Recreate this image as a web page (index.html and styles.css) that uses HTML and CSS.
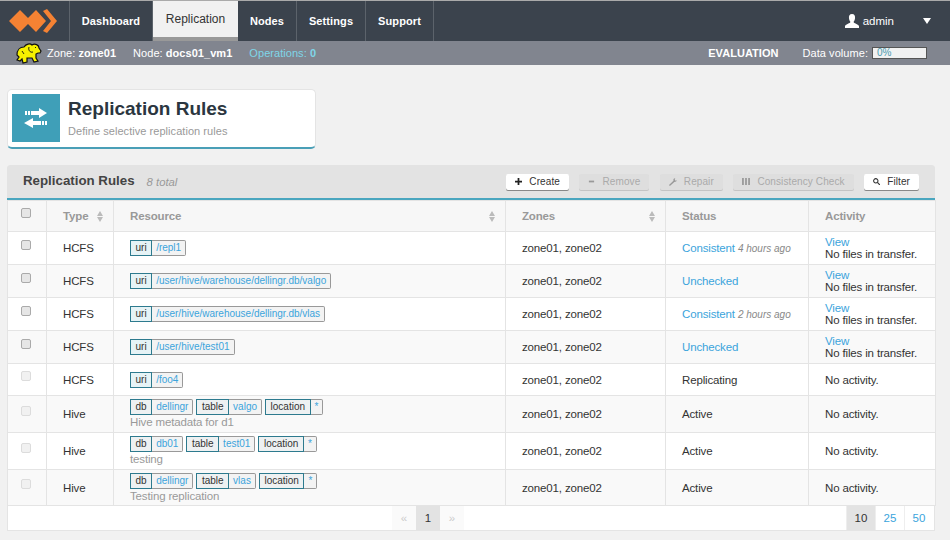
FILE: index.html
```html
<!DOCTYPE html>
<html lang="en">
<head>
  <meta charset="UTF-8" />
  <title>Replication Rules</title>
  <link rel="stylesheet" href="styles.css">
</head>
<body>

<div class="navbar">
  <div class="logo">
    <svg width="58" height="32" viewBox="0 0 58 32">
      <path fill="#f58233" d="M9 16 L20 5 L28 13 L36 5 L46 16 L36 27 L28 19 L20 27 Z"/>
      <path fill="#f58233" d="M43 6 L47 4 L57 16 L47 28 L43 26 L51 16 Z"/>
    </svg>
  </div>
  <a class="nav-item">Dashboard</a>
  <a class="nav-item active">Replication</a>
  <a class="nav-item">Nodes</a>
  <a class="nav-item">Settings</a>
  <a class="nav-item">Support</a>
  <div class="user">
    <svg width="14" height="14" viewBox="0 0 14 14">
      <path fill="#fff" d="M7 0 C9.4 0 10.4 2 10 4.6 C9.7 6.400 9 7.400 8.600 8 C8.800 9.400 13 9.800 14 12 L14 14 L0 14 L0 12 C1 9.800 5.200 9.400 5.400 8 C5 7.400 4.300 6.400 4 4.600 C3.600 2 4.600 0 7 0 Z"/>
    </svg>
    <span>admin</span>
    <i class="caret"></i>
  </div>
</div>

<div class="subbar">
  <svg class="elephant" width="26" height="21" viewBox="0 0 26 21">
    <path fill="#f6f000" stroke="#111" stroke-width="1.200" d="M1 12 C1 7 4 4 8 4 C10 1 14 0 16 2 C19 0 23 2 23 5 L25 8 L24 10 L22 10 L20 11 L20 15 L22 18 L18 19 L16 15 L11 15 L11 19 L7 20 L6 16 L4 18 L1 17 L3 14 Z"/>
    <path fill="none" stroke="#111" stroke-width="0.900" d="M13 4 C12 7 14 10 17 9 M6 8 L8 11 M19 4 L20 5"/>
  </svg>
  <span class="sub-text">Zone: <b>zone01</b></span>
  <span class="sub-text">Node: <b>docs01_vm1</b></span>
  <span class="sub-text ops">Operations: <b>0</b></span>
  <div class="sub-right">
    <b class="eval">EVALUATION</b>
    <span class="sub-text">Data volume:</span>
    <div class="volume">0%</div>
  </div>
</div>

<div class="page-title">
  <div class="page-icon">
    <svg width="24" height="20" viewBox="0 0 24 20">
      <path fill="#fff" d="M1 3 H3 V7 H1 Z M4 3 H6 V7 H4 Z M7 3 H15 V0 L23 5 L15 10 V7 H7 Z"/>
      <path fill="#fff" d="M9 10 V13 H17 V17 H9 V20 L0 15 Z M18 13 H20 V17 H18 Z M21 13 H23 V17 H21 Z"/>
    </svg>
  </div>
  <div>
    <h1>Replication Rules</h1>
    <p>Define selective replication rules</p>
  </div>
</div>

<div class="panel">
  <div class="panel-head">
    <h2>Replication Rules</h2>
    <em>8 total</em>
    <div class="actions">
      <button class="btn">
        <svg width="7" height="7" viewBox="0 0 8 8"><path fill="#222" d="M3 0 H5 V3 H8 V5 H5 V8 H3 V5 H0 V3 H3 Z"/></svg>
        Create
      </button>
      <button class="btn disabled">
        <svg width="7" height="7" viewBox="0 0 8 8"><path fill="#999" d="M1 3 H7 V5 H1 Z"/></svg>
        Remove
      </button>
      <button class="btn disabled">
        <svg width="8" height="8" viewBox="0 0 9 9"><path fill="#999" d="M0 8 L5 3 L5 1 L7 0 L6.500 2 L7.500 3 L9 2.500 L8 4 L6 4.500 L1 9 Z"/></svg>
        Repair
      </button>
      <button class="btn disabled">
        <svg width="8" height="7" viewBox="0 0 9 8"><path fill="#999" d="M0 0 H2 V8 H0 Z M3.500 0 H5.500 V8 H3.500 Z M7 0 H9 V8 H7 Z"/></svg>
        Consistency Check
      </button>
      <button class="btn">
        <svg width="7" height="7" viewBox="0 0 8 8"><circle cx="3.200" cy="3.200" r="2.500" fill="none" stroke="#333" stroke-width="1.200"/><path stroke="#333" stroke-width="1.400" d="M5 5 L8 8"/></svg>
        Filter
      </button>
    </div>
  </div>

  <table>
    <colgroup>
      <col class="c-check"><col class="c-type"><col class="c-res"><col class="c-zones"><col class="c-status"><col class="c-act">
    </colgroup>
    <thead>
      <tr>
        <th class="center"><span class="check"></span></th>
        <th><div class="th-in">Type <i class="sort"></i></div></th>
        <th><div class="th-in">Resource <i class="sort"></i></div></th>
        <th><div class="th-in">Zones <i class="sort"></i></div></th>
        <th>Status</th>
        <th>Activity</th>
      </tr>
    </thead>
    <tbody>
      <tr class="r33">
        <td class="center"><span class="check"></span></td>
        <td>HCFS</td>
        <td><span class="tag"><span class="k light">uri</span><a class="v">/repl1</a></span></td>
        <td>zone01, zone02</td>
        <td><a>Consistent</a> <em class="ago">4 hours ago</em></td>
        <td class="activity"><a>View</a><br>No files in transfer.</td>
      </tr>
      <tr class="r33">
        <td class="center"><span class="check"></span></td>
        <td>HCFS</td>
        <td><span class="tag"><span class="k light">uri</span><a class="v">/user/hive/warehouse/dellingr.db/valgo</a></span></td>
        <td>zone01, zone02</td>
        <td><a>Unchecked</a></td>
        <td class="activity"><a>View</a><br>No files in transfer.</td>
      </tr>
      <tr class="r33">
        <td class="center"><span class="check"></span></td>
        <td>HCFS</td>
        <td><span class="tag"><span class="k light">uri</span><a class="v">/user/hive/warehouse/dellingr.db/vlas</a></span></td>
        <td>zone01, zone02</td>
        <td><a>Consistent</a> <em class="ago">2 hours ago</em></td>
        <td class="activity"><a>View</a><br>No files in transfer.</td>
      </tr>
      <tr class="r33">
        <td class="center"><span class="check"></span></td>
        <td>HCFS</td>
        <td><span class="tag"><span class="k light">uri</span><a class="v">/user/hive/test01</a></span></td>
        <td>zone01, zone02</td>
        <td><a>Unchecked</a></td>
        <td class="activity"><a>View</a><br>No files in transfer.</td>
      </tr>
      <tr class="r32">
        <td class="center"><span class="check off"></span></td>
        <td>HCFS</td>
        <td><span class="tag"><span class="k light">uri</span><a class="v">/foo4</a></span></td>
        <td>zone01, zone02</td>
        <td>Replicating</td>
        <td>No activity.</td>
      </tr>
      <tr class="r37">
        <td class="center"><span class="check off"></span></td>
        <td>Hive</td>
        <td>
          <span class="tag"><span class="k">db</span><a class="v">dellingr</a></span>
          <span class="tag"><span class="k">table</span><a class="v">valgo</a></span>
          <span class="tag"><span class="k">location</span><a class="v">*</a></span>
          <div class="desc">Hive metadata for d1</div>
        </td>
        <td>zone01, zone02</td>
        <td>Active</td>
        <td>No activity.</td>
      </tr>
      <tr class="r37">
        <td class="center"><span class="check off"></span></td>
        <td>Hive</td>
        <td>
          <span class="tag"><span class="k">db</span><a class="v">db01</a></span>
          <span class="tag"><span class="k">table</span><a class="v">test01</a></span>
          <span class="tag"><span class="k">location</span><a class="v">*</a></span>
          <div class="desc">testing</div>
        </td>
        <td>zone01, zone02</td>
        <td>Active</td>
        <td>No activity.</td>
      </tr>
      <tr class="r36">
        <td class="center"><span class="check off"></span></td>
        <td>Hive</td>
        <td>
          <span class="tag"><span class="k">db</span><a class="v">dellingr</a></span>
          <span class="tag"><span class="k">table</span><a class="v">vlas</a></span>
          <span class="tag"><span class="k">location</span><a class="v">*</a></span>
          <div class="desc">Testing replication</div>
        </td>
        <td>zone01, zone02</td>
        <td>Active</td>
        <td>No activity.</td>
      </tr>
    </tbody>
  </table>

  <div class="panel-foot">
    <div class="pages">
      <span class="pg off">«</span><span class="pg cur">1</span><span class="pg off">»</span>
    </div>
    <div class="sizes">
      <span class="sz cur">10</span><a class="sz">25</a><a class="sz">50</a>
    </div>
  </div>
</div>

</body>
</html>
```

FILE: styles.css
```css
* {
  box-sizing: border-box;
}

body {
  margin: 0;
  background: #f1f1f1;
  font-family: "Liberation Sans", Arial, sans-serif;
  font-size: 12px;
  color: #333;
  border-top: 1px solid #aaa;
  height: 540px;
  overflow: hidden;
}

a {
  color: #3ba4dc;
}

/* top nav */
.navbar {
  display: flex;
  height: 40px;
  background: #3b434d;
  color: #fff;
}

.logo {
  width: 70px;
  border-right: 1px solid #5c636b;
  padding: 4px 0 0 0;
}

.nav-item {
  display: flex;
  align-items: center;
  justify-content: center;
  padding: 0 12px;
  border-right: 1px solid #5c636b;
  font-size: 11px;
  letter-spacing: 0.1px;
  font-weight: bold;
  color: #fff;
}

.nav-item:nth-child(2) { width: 83px; }
.nav-item:nth-child(4) { width: 59px; }
.nav-item:nth-child(5) { width: 69px; }
.nav-item:nth-child(6) { width: 68px; }

.nav-item.active {
  width: 85px;
  background: #f1f1f1;
  color: #333;
  font-size: 12px;
  letter-spacing: 0;
  font-weight: normal;
  border-right: none;
  border-bottom: 4px solid #999;
}

.user {
  margin-left: auto;
  display: flex;
  align-items: center;
  padding-right: 19px;
  font-size: 11.5px;
  color: #fff;
}

.user span {
  margin-left: 4px;
}

.caret {
  width: 0;
  height: 0;
  margin-left: 29px;
  border-left: 4px solid transparent;
  border-right: 4px solid transparent;
  border-top: 6px solid #fff;
}

/* status bar */
.subbar {
  display: flex;
  align-items: center;
  height: 24px;
  background: #81858f;
  color: #fff;
  font-size: 11px;
  letter-spacing: 0.05px;
  padding-left: 16px;
}

.elephant {
  margin-right: 5px;
}

.sub-text {
  margin-right: 17px;
}

.ops {
  color: #7fd6e8;
}

.sub-right {
  margin-left: auto;
  display: flex;
  align-items: center;
  padding-right: 23px;
}

.eval {
  margin-right: 24px;
}

.sub-right .sub-text {
  margin-right: 4px;
}

.volume {
  width: 55px;
  height: 12px;
  background: #f1f1f1;
  border: 1px solid #555;
  color: #4b9bb0;
  font-size: 10px;
  line-height: 10px;
  padding-left: 4px;
}

/* page heading card */
.page-title {
  display: flex;
  width: 309px;
  height: 60px;
  margin: 24px 0 16px 7px;
  padding: 4px;
  background: #fff;
  border: 1px solid #e4e4e4;
  border-bottom: 2px solid #4a9fb7;
  border-radius: 5px;
}

.page-icon {
  display: flex;
  align-items: center;
  justify-content: center;
  width: 48px;
  height: 48px;
  margin-right: 8px;
  background: #3f9fb8;
}

.page-title h1 {
  margin: 0;
  padding-top: 3px;
  font-size: 19px;
  line-height: 24px;
  font-weight: bold;
  color: #2b3640;
}

.page-title p {
  margin: 3px 0 0;
  font-size: 11px;
  letter-spacing: 0.05px;
  line-height: 14px;
  color: #999;
}

/* table panel */
.panel {
  width: 928px;
  margin-left: 7px;
  background: #fff;
  border-radius: 3px 3px 0 0;
  border-bottom: 1px solid #e4e4e4;
}

.panel-head {
  display: flex;
  align-items: center;
  height: 35px;
  padding: 0 16px;
  background: #e3e3e3;
  border-bottom: 2px solid #4aa6bf;
  border-radius: 3px 3px 0 0;
}

.panel-head h2 {
  margin: 0 0 2px;
  font-size: 13.3px;
  font-weight: bold;
  color: #444;
}

.panel-head em {
  margin-left: 12px;
  font-size: 11.3px;
  color: #999;
}

.actions {
  display: flex;
  margin-left: auto;
  gap: 10.5px;
}

.btn {
  display: flex;
  align-items: center;
  justify-content: center;
  gap: 7px;
  height: 16px;
  padding: 0 9px;
  border: none;
  border-radius: 2px;
  background: #fff;
  box-shadow: 0 1px 0 #888;
  font-family: inherit;
  font-size: 10px;
  color: #333;
  letter-spacing: 0.1px;
}

.btn.disabled {
  background: #dedede;
  color: #aaa;
  box-shadow: 0 1px 0 #c4c4c4;
}

table {
  width: 928px;
  border-collapse: collapse;
  table-layout: fixed;
  font-size: 11.5px;
  letter-spacing: -0.15px;
}

.c-check { width: 39px; }
.c-type { width: 67px; }
.c-res { width: 392px; }
.c-zones { width: 160px; }
.c-status { width: 143px; }
.c-act { width: 127px; }

th, td {
  border: 1px solid #e4e4e4;
  padding: 0 8px 0 16px;
  text-align: left;
  vertical-align: middle;
}

th {
  height: 31px;
  background: #f7f7f7;
  color: #999;
  font-weight: bold;
}

.th-in {
  display: flex;
  align-items: center;
  justify-content: space-between;
  margin-right: 2px;
}

.sort {
  display: block;
  box-sizing: content-box;
  width: 0;
  height: 0;
  margin-bottom: 6px;
  border-left: 3px solid transparent;
  border-right: 3px solid transparent;
  border-bottom: 5px solid #bbb;
  position: relative;
}

.sort::after {
  content: "";
  position: absolute;
  left: -3px;
  top: 6px;
  width: 0;
  height: 0;
  border-left: 3px solid transparent;
  border-right: 3px solid transparent;
  border-top: 5px solid #bbb;
}

td {
  color: #333;
}

tbody tr:nth-child(even) td {
  background: #f9f9f9;
}

.r33 td { height: 33px; }
.r32 td { height: 32px; }
.r37 td { height: 37px; }
.r36 td { height: 36px; }

th.center, td.center {
  text-align: center;
  padding: 0 2px 0 0;
}

.check {
  display: inline-block;
  width: 10px;
  height: 10px;
  margin-bottom: 5px;
  background: #e6e6e6;
  border: 1px solid #aaa;
  border-radius: 2px;
}

.check.off {
  background: #f1f1f1;
  border-color: #dcdcdc;
}

.ago {
  font-size: 10px;
  letter-spacing: 0;
  color: #888;
}

.activity {
  line-height: 12px;
}

.tag {
  display: inline-flex;
  height: 16px;
  font-size: 10px;
  letter-spacing: 0;
  line-height: 14px;
  vertical-align: top;
}

.k {
  padding: 0 4.5px;
  background: #eef1f2;
  border: 1px solid #2d7a8e;
  color: #333;
}

.k.light {
  background: #e6f3f6;
}

.v {
  padding: 0 4px;
  background: #f3f3f3;
  border: 1px solid #999;
  border-left: none;
  border-radius: 0 2px 2px 0;
}

.desc {
  line-height: 13px;
  margin-top: 1px;
  color: #999;
}

/* footer */
.panel-foot {
  display: flex;
  justify-content: space-between;
  height: 24px;
  padding: 0 1px 0 384px;
  font-size: 11.5px;
  border-left: 1px solid #e4e4e4;
  border-right: 1px solid #e4e4e4;
}

.pages, .sizes {
  display: flex;
}

.pg, .sz {
  display: flex;
  align-items: center;
  justify-content: center;
  width: 24px;
}

.sz {
  width: 29px;
  border-left: 1px solid #eee;
}

.pg.off {
  background: #fafafa;
  color: #ccc;
}

.cur {
  background: #e3e3e3;
  color: #333;
}
```
